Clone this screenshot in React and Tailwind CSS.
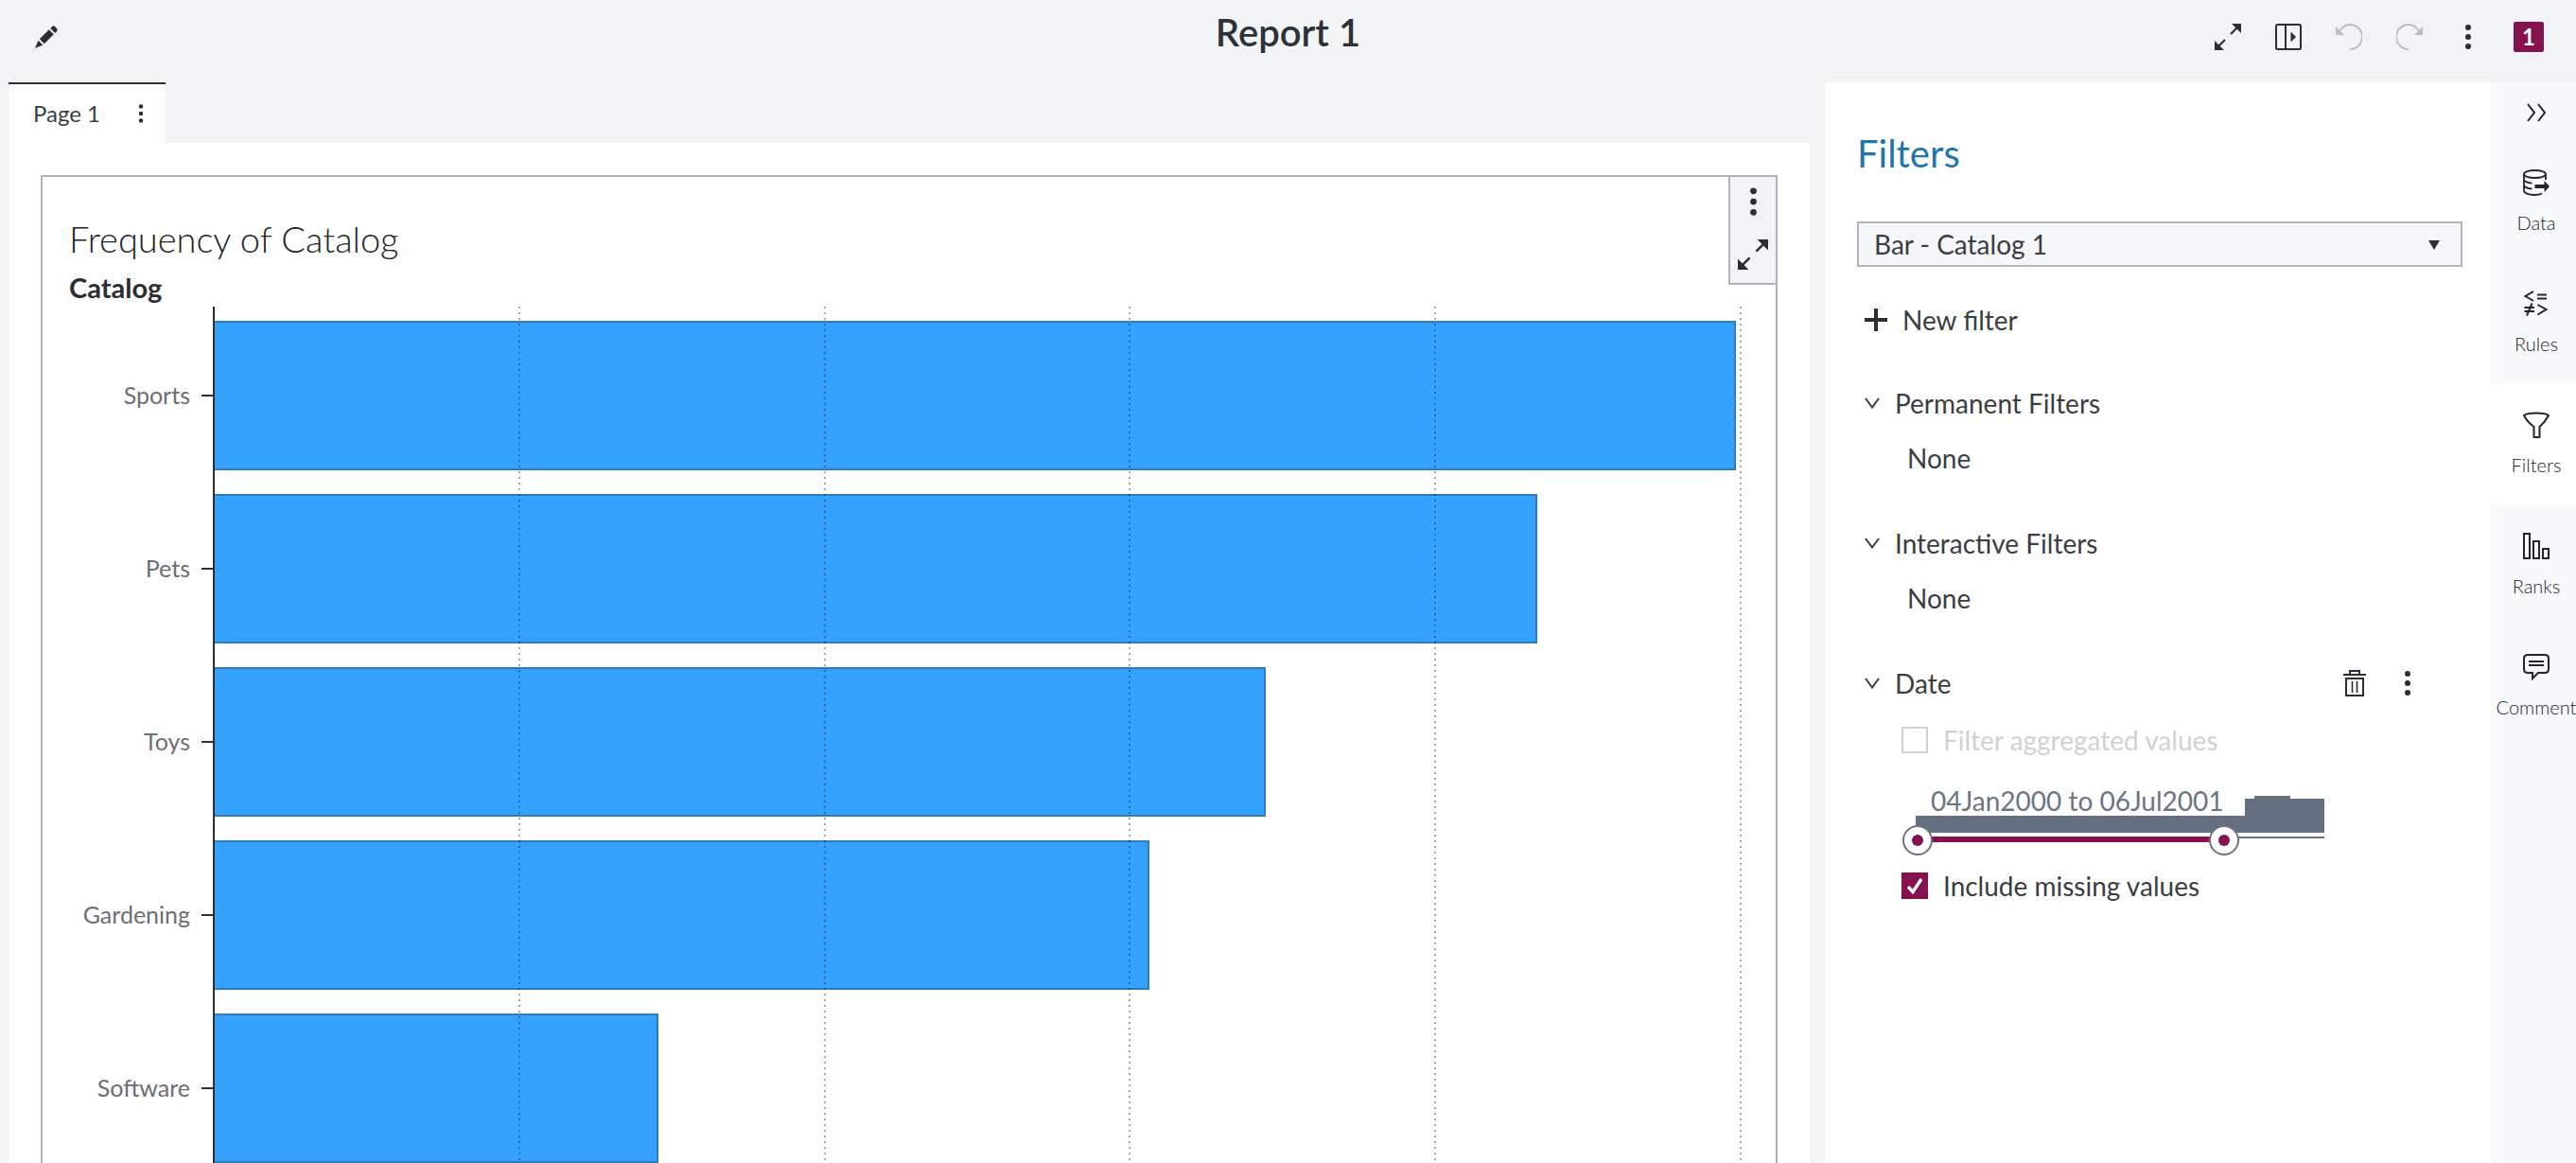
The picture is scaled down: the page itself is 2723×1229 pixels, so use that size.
import React, { useState } from "react";

const bars = [
  { label: "Sports", value: 4.98 },
  { label: "Pets", value: 4.33 },
  { label: "Toys", value: 3.443 },
  { label: "Gardening", value: 3.06 },
  { label: "Software", value: 1.452 },
];

const axisMax = 5;

const Dots = ({ className }) => (
  <svg viewBox="0 0 8 28" fill="currentColor" className={className}>
    <circle cx="4" cy="4" r="3" />
    <circle cx="4" cy="14" r="3" />
    <circle cx="4" cy="24" r="3" />
  </svg>
);

const ExpandIcon = ({ className }) => (
  <svg viewBox="0 0 28 28" className={className}>
    <path d="M17 11l7-7M11 17l-7 7" stroke="currentColor" strokeWidth="2.2" />
    <path d="M18 0h10v10zM0 18v10h10z" fill="currentColor" />
  </svg>
);

const PencilIcon = () => (
  <svg viewBox="0 0 24 24" fill="currentColor" className="size-6">
    <path d="M18 1.2Q19.5-.4 21 1l2 2q1.400 1.500 0 3l-1.800 1.900-5-5zM14.800 4.200l5 5-10 10-5-5zM3.500 15.800l4.800 4.700L0 24z" />
  </svg>
);

const PanelIcon = () => (
  <svg viewBox="0 0 28 28" fill="none" stroke="currentColor" strokeWidth="2" className="size-7">
    <rect x="1" y="1" width="26" height="26" rx="1.500" />
    <path d="M11 1v26" />
    <path d="M17 9.500v9l4.500-4.500z" fill="currentColor" strokeWidth="1" />
  </svg>
);

const UndoIcon = ({ className }) => (
  <svg viewBox="0 0 28 28" fill="none" className={className}>
    <path d="M4 8C7 3 11 1 15 1a13 13 0 0 1 0 26" stroke="currentColor" strokeWidth="2" />
    <path d="M0 3v9h9z" fill="currentColor" />
  </svg>
);

const TrashIcon = () => (
  <svg viewBox="0 0 24 30" fill="none" stroke="currentColor" strokeWidth="2" className="h-[30px] w-6">
    <path d="M0 6h24M7 6V2h10v4" />
    <path d="M3 10h18v18H3z" />
    <path d="M9.500 13v12M14.500 13v12" strokeWidth="1.600" />
  </svg>
);

const ChevronDown = () => (
  <svg viewBox="0 0 16 12" fill="none" stroke="currentColor" strokeWidth="2" className="h-3 w-4">
    <path d="M1 1l7 9.500L15 1" />
  </svg>
);

const DataIcon = () => (
  <svg viewBox="0 0 28 28" fill="none" stroke="currentColor" strokeWidth="1.800" className="size-7">
    <ellipse cx="12.500" cy="5" rx="11.500" ry="4" />
    <path d="M1 5v17.500c0 2.500 5 4.500 11 4.500 3 0 5.500-.4 8-1.500M24 5v6M1 11c1 2 4 3.200 8.500 3.700M1 17c1 2 4 3.200 8.500 3.700" />
    <path d="M12.500 16h10v-4l5.500 6-5.500 6v-4h-10z" fill="currentColor" stroke="none" />
  </svg>
);

const RulesIcon = () => (
  <svg viewBox="0 0 28 28" fill="none" stroke="currentColor" strokeWidth="2" className="size-7">
    <path d="M11 1L2.500 6 11 11M15 4.500h10M15 8.500h10M1.500 18h10.500M1.500 22h10.500M9.500 13.500l-5.500 13M15.500 15l9 5-9 5.500" />
  </svg>
);

const FunnelIcon = () => (
  <svg viewBox="0 0 28 28" fill="none" stroke="currentColor" strokeWidth="2" strokeLinejoin="round" className="size-7">
    <path d="M1 4c4-3.500 22-3.500 26 0-2 4-5 8-9.500 12v11h-6V16C6 12 3 8 1 4z" />
  </svg>
);

const RanksIcon = () => (
  <svg viewBox="0 0 28 28" fill="none" stroke="currentColor" strokeWidth="2" className="size-7">
    <path d="M1 1h6v26H1zM11 9h6v18h-6zM21 17h6v10h-6z" />
  </svg>
);

const CommentIcon = () => (
  <svg viewBox="0 0 28 28" fill="none" stroke="currentColor" strokeWidth="2" className="size-7">
    <path d="M5 1h18q4 0 4 4v11q0 4-4 4h-7l-6 6v-6H5q-4 0-4-4V5q0-4 4-4z" />
    <path d="M6 8h16M6 12h16" />
  </svg>
);

const tools = [
  { label: "Data", Icon: DataIcon },
  { label: "Rules", Icon: RulesIcon },
  { label: "Filters", Icon: FunnelIcon },
  { label: "Ranks", Icon: RanksIcon },
  { label: "Comment", Icon: CommentIcon },
];

const Header = () => (
  <header className="grid h-[87px] shrink-0 grid-cols-3 items-start text-[#2b2e33]">
    <div className="pt-[27px] pl-[37px]">
      <button type="button" aria-label="Edit" className="block">
        <PencilIcon />
      </button>
    </div>
    <h1 className="pt-[9px] text-center text-[40px] leading-[50px] font-semibold text-[#2b3338]">
      Report 1
    </h1>
    <div className="mt-[23px] flex h-8 items-center justify-end gap-9 pr-[34px]">
      <button type="button" aria-label="Maximize">
        <ExpandIcon className="size-7" />
      </button>
      <button type="button" aria-label="Toggle panel">
        <PanelIcon />
      </button>
      <button type="button" aria-label="Undo" disabled className="text-[#bcbec1]">
        <UndoIcon className="size-7" />
      </button>
      <button type="button" aria-label="Redo" disabled className="text-[#bcbec1]">
        <UndoIcon className="size-7 -scale-x-100" />
      </button>
      <button type="button" aria-label="More" className="mx-2">
        <Dots className="h-7 w-2" />
      </button>
      <button
        type="button"
        className="size-8 rounded-xs bg-[#85124f] text-2xl leading-8 font-bold text-white"
      >
        1
      </button>
    </div>
  </header>
);

const BarChart = () => (
  <div className="flex min-h-0 flex-1 overflow-hidden pt-[3px] pr-9">
    <ul className="w-[156px] shrink-0 pt-[15px] text-right text-[25px] font-normal text-[#6b6e76]">
      {bars.map((bar) => (
        <li key={bar.label} className="mb-[25px] flex h-[158px] items-center justify-end">
          {bar.label}
        </li>
      ))}
    </ul>
    <div className="ml-3 w-3 shrink-0 pt-[15px]">
      {bars.map((bar) => (
        <div key={bar.label} className="mb-[25px] flex h-[158px] items-center">
          <div className="h-0.5 w-full bg-[#2b2e33]" />
        </div>
      ))}
    </div>
    <div className="relative flex-1 border-l-2 border-[#2b2e33] pt-[15px]">
      {bars.map((bar) => (
        <div
          key={bar.label}
          className="mb-[25px] h-[158px] border-2 border-l-0 border-[#2f7db8] bg-[#36a2ff]"
          style={{ width: `${(bar.value / axisMax) * 100}%` }}
        />
      ))}
      <div className="absolute inset-0 grid grid-cols-5">
        {[1, 2, 3, 4, 5].map((n) => (
          <div key={n} className="flex justify-end">
            <div className="w-0.5 bg-[repeating-linear-gradient(to_bottom,#00000059_0px,#00000059_2px,transparent_2px,transparent_6px)]" />
          </div>
        ))}
      </div>
    </div>
  </div>
);

const FilterSection = ({ title, children, actions }) => (
  <section>
    <div className="flex h-9 items-center">
      <button type="button" className="flex items-center gap-4 pl-2">
        <ChevronDown />
        {title}
      </button>
      {actions}
    </div>
    {children}
  </section>
);

const DateRange = () => (
  <div className="mt-7 ml-[62px] w-[432px]">
    <div className="relative h-[76px]">
      <div className="absolute inset-x-0 bottom-[24px] h-[18px] bg-[#646f80]" />
      <div className="absolute right-0 bottom-[24px] h-[36px] w-[84px] bg-[#646f80]" />
      <div className="absolute right-[36px] bottom-[24px] h-[39px] w-[38px] bg-[#646f80]" />
      <div className="absolute inset-x-0 bottom-[18px] h-0.5 bg-[#646f80]" />
      <div className="absolute bottom-[14px] left-0 h-1.5 w-[326px] bg-[#85124f]" />
      <span className="absolute top-0 left-4 whitespace-nowrap text-[#6b7482]">
        04Jan2000 to 06Jul2001
      </span>
      {["From", "To"].map((name) => (
        <label
          key={name}
          className={`absolute bottom-0 flex size-8 items-center justify-center rounded-full border-2 border-[#6b7482] bg-white ${
            name === "From" ? "-left-[14px]" : "left-[310px]"
          }`}
        >
          <span className="size-3 rounded-full bg-[#85124f]" />
          <input type="range" aria-label={name} className="absolute inset-0 w-full opacity-0" />
        </label>
      ))}
    </div>
  </div>
);

const FiltersPanel = () => {
  const [includeMissing, setIncludeMissing] = useState(true);

  return (
    <aside className="w-[704px] shrink-0 bg-white pt-[50px] pr-[30px] pl-[34px] text-[28px] leading-9 font-normal text-[#3a3d42]">
      <h2 className="text-[40px] leading-[50px] text-[#1f76ac]">Filters</h2>

      <div className="relative mt-[47px]">
        <select
          aria-label="Object"
          className="h-12 w-full appearance-none border-2 border-[#b0b6bc] bg-[#f6f7fa] px-4"
        >
          <option>Bar - Catalog 1</option>
        </select>
        <svg viewBox="0 0 12 10" className="pointer-events-none absolute top-5 right-6 h-2.5 w-3">
          <path d="M0 0h12L6 10z" fill="#2b2e33" />
        </svg>
      </div>

      <button type="button" className="mt-[38px] flex items-center gap-4 pl-2">
        <svg viewBox="0 0 24 24" className="size-6">
          <path d="M12 0v24M0 12h24" stroke="#2b2e33" strokeWidth="4" />
        </svg>
        New filter
      </button>

      <div className="mt-[52px] flex flex-col gap-[54px]">
        <FilterSection title="Permanent Filters">
          <p className="mt-[22px] pl-[53px]">None</p>
        </FilterSection>
        <FilterSection title="Interactive Filters">
          <p className="mt-[22px] pl-[53px]">None</p>
        </FilterSection>
        <FilterSection
          title="Date"
          actions={
            <div className="ml-auto flex items-center gap-10 pr-[54px] text-[#2b2e33]">
              <button type="button" aria-label="Delete filter">
                <TrashIcon />
              </button>
              <button type="button" aria-label="Filter options">
                <Dots className="h-7 w-2" />
              </button>
            </div>
          }
        >
          <label className="mt-6 flex items-center gap-4 pl-[47px] text-[#cfd1d5]">
            <input
              type="checkbox"
              disabled
              className="size-7 appearance-none border-2 border-[#cfd1d5] bg-white"
            />
            Filter aggregated values
          </label>
          <DateRange />
          <label className="relative mt-[14px] flex items-center gap-4 pl-[47px]">
            <input
              type="checkbox"
              checked={includeMissing}
              onChange={(e) => setIncludeMissing(e.target.checked)}
              className="size-7 appearance-none border-2 border-[#85124f] checked:bg-[#85124f]"
            />
            {includeMissing && (
              <svg viewBox="0 0 28 28" className="pointer-events-none absolute left-[47px] size-7">
                <path d="M7 15l5 5.500L21 7" fill="none" stroke="white" strokeWidth="3.500" />
              </svg>
            )}
            Include missing values
          </label>
        </FilterSection>
      </div>
    </aside>
  );
};

const ToolRail = () => (
  <nav className="w-[90px] shrink-0 bg-[#f7f9fb]">
    <button type="button" aria-label="Collapse" className="flex h-[63px] w-full items-center justify-center pl-1.5">
      <svg viewBox="0 0 22 20" fill="none" stroke="currentColor" strokeWidth="2" className="h-5 w-[22px]">
        <path d="M2 1l7 9-7 9M13 1l7 9-7 9" />
      </svg>
    </button>
    {tools.map(({ label, Icon }) => (
      <button
        key={label}
        type="button"
        className={`flex h-32 w-full flex-col items-center gap-3.5 pt-[29px] pl-1.5 text-xl leading-7 ${
          label === "Filters" ? "bg-white" : ""
        }`}
      >
        <Icon />
        {label}
      </button>
    ))}
  </nav>
);

export default function App() {
  return (
    <div className="flex h-screen flex-col overflow-hidden bg-[#f1f3f5] font-[Lato,sans-serif] font-light text-[#222529]">
      <Header />
      <div className="flex min-h-0 flex-1">
        <main className="mr-4 ml-[9px] flex min-w-0 flex-1 flex-col">
          <div className="flex h-16 w-[166px] shrink-0 items-center justify-between border-t-2 border-[#2b2e33] bg-white pr-[23px] pl-[26px] text-2xl font-normal text-[#3a3d42]">
            Page 1
            <button type="button" aria-label="Page options" className="text-[#2b2e33]">
              <Dots className="h-[22px] w-1.5" />
            </button>
          </div>
          <div className="flex min-h-0 flex-1 flex-col bg-white px-[34px] pt-[34px]">
            <div className="relative flex min-h-0 flex-1 flex-col border-2 border-b-0 border-[#b0b4b8]">
              <div className="absolute top-0 right-0 flex w-[50px] flex-col items-center gap-6 border-b-2 border-l-2 border-[#b0b4b8] bg-[#f1f3f6] pt-2.5 pb-3.5 text-[#2b2e33]">
                <button type="button" aria-label="Object menu">
                  <Dots className="h-8 w-[9px]" />
                </button>
                <button type="button" aria-label="Maximize object">
                  <ExpandIcon className="size-8" />
                </button>
              </div>
              <h2 className="pt-[42px] pl-7 text-[38px] leading-[46px]">Frequency of Catalog</h2>
              <h3 className="mt-3 pl-7 text-[29px] leading-[34px] font-bold text-[#2b2e33]">Catalog</h3>
              <BarChart />
            </div>
          </div>
        </main>
        <FiltersPanel />
        <ToolRail />
      </div>
    </div>
  );
}
